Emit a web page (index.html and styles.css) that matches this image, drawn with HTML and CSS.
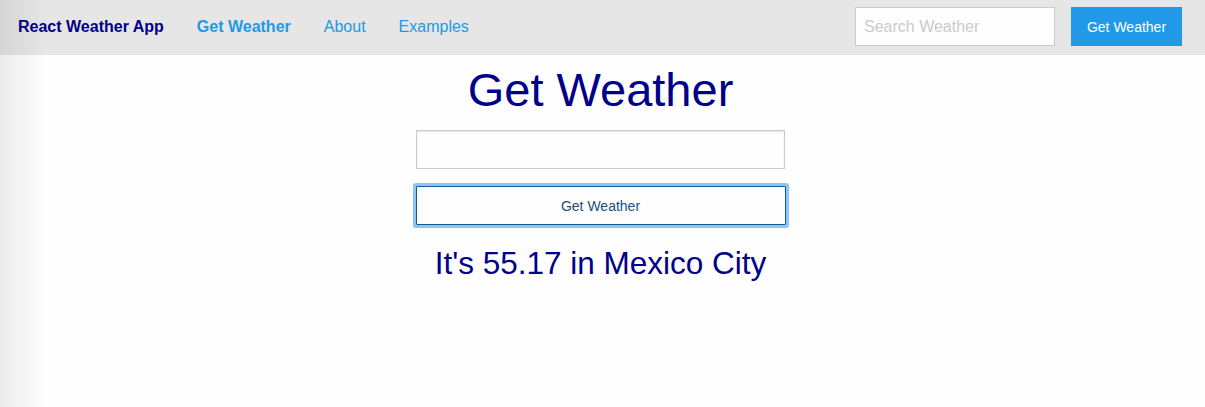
FILE: index.html
```html
<!DOCTYPE html>
<html>
<head>
<meta charset="utf-8">
<link rel="stylesheet" href="styles.css">
</head>
<body>
<div class="edge-shade"></div>
<header class="top-bar">
  <nav class="top-left">
    <span class="brand">React Weather App</span>
    <a class="nav-link active" href="#">Get Weather</a>
    <a class="nav-link" href="#">About</a>
    <a class="nav-link" href="#">Examples</a>
  </nav>
  <form class="top-right">
    <input class="search-input" type="text" placeholder="Search Weather">
    <button class="search-btn" type="button">Get Weather</button>
  </form>
</header>
<main class="content">
  <h1 class="title">Get Weather</h1>
  <form class="weather-form">
    <input class="city-input" type="text">
    <button class="get-btn" type="button">Get Weather</button>
  </form>
  <h3 class="result">It's 55.17 in Mexico City</h3>
</main>
</body>
</html>
```
FILE: styles.css
```css
* { box-sizing: border-box; }
html, body { margin: 0; padding: 0; }
body {
  font-family: "Liberation Sans", Arial, sans-serif;
  background: #fefefe;
  width: 1205px;
  height: 407px;
  overflow: hidden;
}
.edge-shade {
  position: fixed;
  left: 0; top: 0; bottom: 0;
  width: 45px;
  background: linear-gradient(to right, rgba(0,0,0,0.07), rgba(0,0,0,0));
  pointer-events: none;
  z-index: 5;
}
.top-bar {
  height: 55px;
  background: #e6e6e6;
  display: flex;
  align-items: center;
  justify-content: space-between;
  padding: 0 23px 2px 18px;
}
.top-left {
  display: flex;
  align-items: center;
  gap: 33px;
}
.brand {
  font-weight: bold;
  font-size: 16px;
  color: #00008b;
}
.nav-link {
  font-size: 16px;
  color: #2199e8;
  text-decoration: none;
}
.nav-link.active { font-weight: bold; }
.top-right {
  display: flex;
  align-items: center;
  gap: 16px;
  margin: 0;
}
.search-input {
  width: 200px;
  height: 39px;
  border: 1px solid #cacaca;
  background: #fefefe;
  padding: 0 8px;
  font-family: inherit;
  font-size: 16px;
  color: #333;
}
.search-input::placeholder { color: #cacaca; }
.search-btn {
  width: 111px;
  height: 39px;
  border: none;
  background: #2199e8;
  color: #fefefe;
  font-family: inherit;
  font-size: 14px;
  padding: 0;
}
.content {
  display: flex;
  flex-direction: column;
  align-items: center;
  padding-right: 4px;
}
.title {
  margin: 2px 0 0;
  font-size: 47px;
  font-weight: normal;
  line-height: 1.4;
  color: #00008b;
  height: 66px;
}
.weather-form {
  display: flex;
  flex-direction: column;
  align-items: center;
  margin: 7px 0 0;
}
.city-input {
  width: 369px;
  height: 39px;
  border: 1px solid #cacaca;
  background: #fefefe;
  box-shadow: inset 0 1px 2px rgba(10,10,10,0.1);
}
.get-btn {
  margin-top: 17px;
  width: 370px;
  height: 39px;
  border: 1px solid #1a5690;
  background: #fefefe;
  color: #1b4f80;
  font-family: inherit;
  font-size: 14px;
  box-shadow: 0 0 0 3px #8fc5f6;
  border-radius: 1px;
}
.result {
  margin: 20px 0 0;
  font-size: 31.5px;
  font-weight: normal;
  color: #00008b;
  line-height: 1.2;
}
```
